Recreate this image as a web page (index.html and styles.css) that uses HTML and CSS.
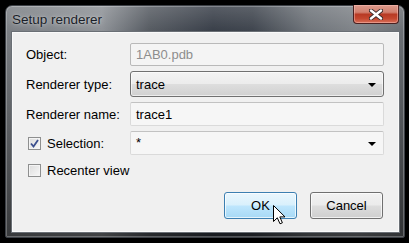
FILE: index.html
```html
<!DOCTYPE html>
<html lang="en">
  <head>
    <meta charset="UTF-8" />
    <meta name="viewport" content="width=device-width, initial-scale=1.0" />
    <title>Setup renderer</title>
    <link rel="stylesheet" href="styles.css">
  </head>
  <body>
    <div class="window">
      <div class="titlebar">
        <span class="title">Setup renderer</span>
        <button class="close-btn">
          <svg viewBox="0 0 14 11" class="close-icon">
            <path d="M2 1.5 12 9.5M12 1.5 2 9.5" stroke="#3a2a2a" stroke-width="4.2" stroke-linecap="round" />
            <path d="M2 1.5 12 9.5M12 1.5 2 9.5" stroke="#ffffff" stroke-width="2.4" stroke-linecap="round" />
          </svg>
        </button>
      </div>

      <div class="client">
        <div class="form">
          <label class="label">Object:</label>
          <div class="field field-disabled">1AB0.pdb</div>

          <label class="label">Renderer type:</label>
          <div class="combo">
            <span>trace</span>
            <span class="arrow"></span>
          </div>

          <label class="label">Renderer name:</label>
          <div class="field">trace1</div>

          <label class="label check-label">
            <span class="checkbox checked">
              <svg viewBox="0 0 9 9" class="tick">
                <path d="M1 4.5 3.5 7.5 8 1" fill="none" stroke="#3b4f8e" stroke-width="1.8" />
              </svg>
            </span>
            Selection:
          </label>
          <div class="field field-combo">
            <span>*</span>
            <span class="arrow"></span>
          </div>
        </div>

        <label class="check-label recenter">
          <span class="checkbox"></span>
          Recenter view
        </label>

        <div class="buttons">
          <button class="btn btn-hover">OK</button>
          <button class="btn">Cancel</button>
        </div>
      </div>
    </div>

    <svg class="cursor" viewBox="0 0 13 20">
      <path d="M0.5 0.5V16.5L4.3 12.8 7 18.8 9.4 17.8 6.8 11.9H12Z" fill="#ffffff" stroke="#000000" stroke-width="1" stroke-linejoin="miter" />
    </svg>
  </body>
</html>
```

FILE: styles.css
```css
* {
  margin: 0;
  box-sizing: border-box;
}
html {
  background-color: #000000;
}
body {
  font-family: "Liberation Sans", Arial, sans-serif;
  font-size: 13px;
  color: #000000;
  padding: 5px 4px 5px 5px;
}

.window {
  width: 400px;
  height: 233px;
  border: 1px solid #3c4046;
  border-radius: 7px 7px 2px 2px;
  box-shadow: inset 0 0 0 1px rgba(255, 255, 255, 0.25);
  background:
    linear-gradient(to bottom, rgba(255, 255, 255, 0.16) 0, rgba(255, 255, 255, 0) 26px, rgba(0, 0, 0, 0.55) 100%),
    linear-gradient(to right, #7a7e83 0%, #8d9196 24%, #555a61 36%, #383e48 52%, #3e444d 62%, #6e7379 76%, #7f8388 88%, #6b6f74 100%);
  display: flex;
  flex-direction: column;
}

.titlebar {
  height: 26px;
  display: flex;
  justify-content: space-between;
  align-items: flex-start;
  padding-left: 6px;
}
.title {
  font-size: 13.5px;
  color: #1a1e28;
  margin-top: 6px;
  text-shadow: 0 0 6px rgba(255, 255, 255, 0.55), 0 0 2px rgba(255, 255, 255, 0.4);
}
.close-btn {
  width: 46px;
  height: 19px;
  margin-right: 5px;
  margin-top: -1px;
  border: 1px solid #4a2020;
  border-top: none;
  border-radius: 0 0 4px 4px;
  box-shadow: inset 0 0 0 1px rgba(255, 200, 190, 0.45);
  background: linear-gradient(to bottom, #dc9a8c 0%, #d2806f 40%, #b83a24 52%, #c4472f 75%, #d8705a 100%);
  display: flex;
  align-items: center;
  justify-content: center;
  padding: 0;
}
.close-icon {
  width: 14px;
  height: 11px;
}

.client {
  margin: 0 4px 4px 5px;
  flex: 1;
  background-color: #f0f0f0;
  border: 1px solid #6a6f75;
  box-shadow: inset 0 0 0 1px #fafafa;
  padding: 11px 15px 0 14px;
}

.form {
  display: grid;
  grid-template-columns: 104px 1fr;
  grid-template-rows: 23px 26px 24px 24px;
  row-gap: 5px;
  align-items: center;
}
.label {
  white-space: nowrap;
}
.field {
  height: 100%;
  background-color: #f6f6f6;
  border: 1px solid #dadada;
  border-top-color: #c2c2c2;
  border-radius: 2px;
  padding: 0 5px;
  display: flex;
  align-items: center;
  justify-content: space-between;
}
.field-disabled {
  color: #8d8d8d;
  border-color: #b9b9b9;
  background-color: #f4f4f4;
}
.combo {
  height: 100%;
  border: 1px solid #707070;
  border-radius: 3px;
  box-shadow: inset 0 0 0 1px rgba(255, 255, 255, 0.6);
  background: linear-gradient(to bottom, #f3f3f3 0%, #ececec 48%, #dddddd 52%, #d0d0d0 100%);
  padding: 0 5px;
  display: flex;
  align-items: center;
  justify-content: space-between;
}
.arrow {
  width: 0;
  height: 0;
  border-left: 4px solid transparent;
  border-right: 4px solid transparent;
  border-top: 4px solid #000000;
  margin-right: 2px;
  margin-top: 2px;
}
.field-combo span:first-child {
  align-self: flex-start;
  margin-top: 3px;
}

.check-label {
  display: flex;
  align-items: center;
  gap: 6px;
  padding-left: 2px;
}
.checkbox {
  width: 13px;
  height: 13px;
  border: 1px solid #8e8f8f;
  background: linear-gradient(to bottom right, #dcdcdc, #f8f8f8);
  box-shadow: inset 0 0 0 1px #f4f4f4;
  display: flex;
  align-items: center;
  justify-content: center;
}
.tick {
  width: 9px;
  height: 9px;
}
.recenter {
  margin-top: 8px;
}

.buttons {
  display: flex;
  justify-content: flex-end;
  gap: 13px;
  margin-top: 14px;
  padding-right: 1px;
  padding-bottom: 13px;
}
.btn {
  width: 73px;
  height: 27px;
  font-family: "Liberation Sans", Arial, sans-serif;
  font-size: 13px;
  color: #000000;
  border: 1px solid #707070;
  border-radius: 3px;
  box-shadow: inset 0 0 0 1px rgba(255, 255, 255, 0.7);
  background: linear-gradient(to bottom, #f2f2f2 0%, #ebebeb 48%, #dddddd 52%, #cfcfcf 100%);
  padding: 0;
}
.btn-hover {
  border-color: #3c7fb1;
  background: linear-gradient(to bottom, #eaf6fd 0%, #d9f0fc 48%, #bee6fd 52%, #a7d9f5 100%);
}

.cursor {
  position: absolute;
  left: 273px;
  top: 205px;
  width: 13px;
  height: 20px;
}
```
